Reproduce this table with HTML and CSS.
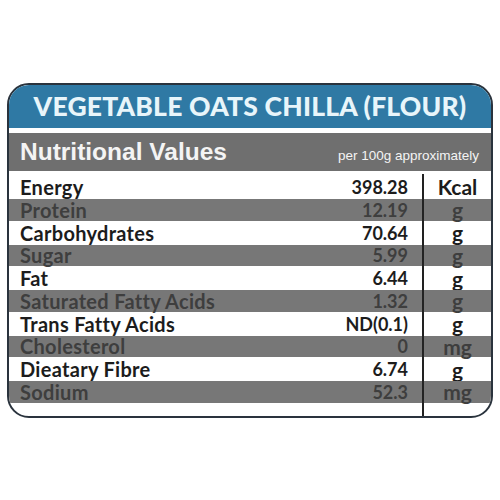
FILE: index.html
```html
<!DOCTYPE html>
<html lang="en">
<head>
    <meta charset="UTF-8">
    <meta name="viewport" content="width=device-width, initial-scale=1.0">
    <title>Vegetable Oats Chilla - Nutrition</title>
    <link rel="stylesheet" href="styles.css">
</head>
<body>

    <div class="card">
        <h1 class="title">VEGETABLE OATS CHILLA (FLOUR)</h1>

        <div class="bar">
            <h2>Nutritional Values</h2>
            <span class="per">per 100g approximately</span>
        </div>

        <div class="facts">
            <div class="row first">
                <span class="name">Energy</span>
                <span class="value">398.28</span>
                <span class="unit">Kcal</span>
            </div>
            <div class="row shade">
                <span class="name">Protein</span>
                <span class="value">12.19</span>
                <span class="unit">g</span>
            </div>
            <div class="row">
                <span class="name">Carbohydrates</span>
                <span class="value">70.64</span>
                <span class="unit">g</span>
            </div>
            <div class="row shade">
                <span class="name">Sugar</span>
                <span class="value">5.99</span>
                <span class="unit">g</span>
            </div>
            <div class="row">
                <span class="name">Fat</span>
                <span class="value">6.44</span>
                <span class="unit">g</span>
            </div>
            <div class="row shade">
                <span class="name">Saturated Fatty Acids</span>
                <span class="value">1.32</span>
                <span class="unit">g</span>
            </div>
            <div class="row">
                <span class="name">Trans Fatty Acids</span>
                <span class="value">ND(0.1)</span>
                <span class="unit">g</span>
            </div>
            <div class="row shade">
                <span class="name">Cholesterol</span>
                <span class="value">0</span>
                <span class="unit">mg</span>
            </div>
            <div class="row">
                <span class="name">Dieatary Fibre</span>
                <span class="value">6.74</span>
                <span class="unit">g</span>
            </div>
            <div class="row shade">
                <span class="name">Sodium</span>
                <span class="value">52.3</span>
                <span class="unit">mg</span>
            </div>
            <div class="row end">
                <span class="name"></span>
                <span class="value"></span>
                <span class="unit"></span>
            </div>
        </div>
    </div>

</body>
</html>
```

FILE: styles.css
```css
* {
    padding: 0;
    margin: 0;
    box-sizing: border-box;
}

body {
    background-color: #ffffff;
    font-family: 'Lato', 'Liberation Sans', sans-serif;
}

.card {
    width: 486px;
    height: 335px;
    margin: 83px 0 0 7px;
    border: 2px solid #2a333d;
    border-radius: 22px;
    overflow: hidden;
    background-color: #ffffff;
}

.title {
    height: 43px;
    background-color: #2f79a4;
    color: #e8f5fa;
    font-size: 26.5px;
    font-weight: 900;
    text-align: center;
    line-height: 43px;
    letter-spacing: 0.2px;
    border-bottom: 5px solid #ffffff;
    box-sizing: content-box;
}

.bar {
    height: 38px;
    background-color: #6f6f6f;
    display: flex;
    justify-content: space-between;
    align-items: baseline;
    padding: 0 12px 0 11px;
    font-family: 'Liberation Sans', Arial, sans-serif;
    color: #f4f4f4;
}

.bar h2 {
    font-size: 24.5px;
    font-weight: bold;
    line-height: 38px;
}

.per {
    font-size: 13.5px;
}

.facts {
    display: flex;
    flex-direction: column;
}

.row {
    display: grid;
    grid-template-columns: 1fr auto 69px;
    align-items: center;
    height: 24px;
    color: #1c1c1c;
    font-weight: bold;
}

.row.first {
    height: 28px;
    padding-top: 3px;
}

.row.shade {
    height: 21.5px;
    background-color: #777777;
    color: #3e3e3e;
}

.row.end {
    height: 15px;
}

.name {
    padding-left: 11px;
    font-size: 20px;
    letter-spacing: 0.3px;
    line-height: 1;
}

.value {
    padding-right: 14px;
    font-size: 18px;
    text-align: right;
    line-height: 1;
}

.unit {
    align-self: stretch;
    border-left: 2px solid #222222;
    text-align: center;
    font-size: 21px;
    display: flex;
    align-items: center;
    justify-content: center;
    line-height: 1;
}
```
